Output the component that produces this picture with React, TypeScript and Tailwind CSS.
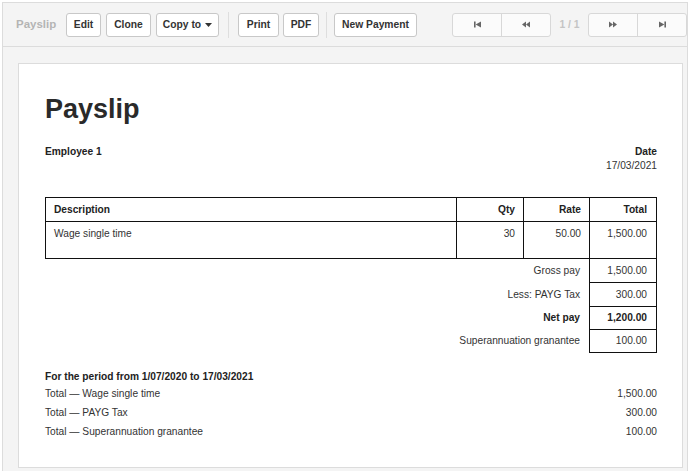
import React from "react";

const Btn = ({ w, children }: { w: string; children: React.ReactNode }) => (
  <div
    className={`${w} h-[24px] flex items-center justify-center border border-[#c8c8c8] rounded-[3px] bg-white text-[#333] text-[10.3px] font-bold`}
  >
    {children}
  </div>
);

const IconFirst = () => (
  <svg width="7" height="7" viewBox="0 0 7 7" fill="#666">
    <rect x="0" y="0.5" width="1.6" height="6" />
    <path d="M7 0.5 L1.6 3.5 L7 6.5Z" />
  </svg>
);
const IconPrev = () => (
  <svg width="8" height="7" viewBox="0 0 8 7" fill="#666">
    <path d="M4 0.5 L0 3.5 L4 6.5Z M8 0.5 L4 3.5 L8 6.5Z" />
  </svg>
);
const IconNext = () => (
  <svg width="8" height="7" viewBox="0 0 8 7" fill="#666">
    <path d="M0 0.5 L4 3.5 L0 6.5Z M4 0.5 L8 3.5 L4 6.5Z" />
  </svg>
);
const IconLast = () => (
  <svg width="7" height="7" viewBox="0 0 7 7" fill="#666">
    <path d="M0 0.5 L5.4 3.5 L0 6.5Z" />
    <rect x="5.4" y="0.5" width="1.6" height="6" />
  </svg>
);

const NavGroup = ({ a, b }: { a: React.ReactNode; b: React.ReactNode }) => (
  <div className="w-[99px] h-[24px] flex border border-[#d8d8d8] rounded-[3px] bg-[#fbfbfb]">
    <div className="flex-1 flex items-center justify-center border-r border-[#d8d8d8]">{a}</div>
    <div className="flex-1 flex items-center justify-center">{b}</div>
  </div>
);

const Sep = () => <div className="w-px h-[26px] bg-[#dedede]" />;

const SummaryRow = ({
  label,
  value,
  bold,
  h,
}: {
  label: string;
  value: string;
  bold?: boolean;
  h: string;
}) => (
  <div className={`flex justify-end ${bold ? "font-bold text-[#222]" : ""}`}>
    <div className={`${h} flex items-center pr-[9px]`}>{label}</div>
    <div
      className={`w-[66px] ${h} box-content flex items-center justify-end border-x border-b border-[#111]`}
    >
      <span className="pr-[9px]">{value}</span>
    </div>
  </div>
);

export default function App() {
  return (
    <div className="w-[690px] h-[471px] bg-white overflow-hidden font-['Liberation_Sans',Arial,sans-serif] text-[#333]">
      <div className="ml-[2px] mt-[2px] w-[686px] h-[480px] border border-[#dcdcdc] bg-[#f4f4f4]">
        {/* toolbar */}
        <div className="h-[44px] border-b border-[#dcdcdc] flex items-center pl-[13px]">
          <div className="text-[11.5px] font-bold text-[#b4b4b4] w-[40px]">Payslip</div>
          <div className="ml-[10px] flex items-center gap-[5px]">
            <Btn w="w-[35px]">Edit</Btn>
            <Btn w="w-[45px]">Clone</Btn>
            <Btn w="w-[63px]">
              <span>Copy to</span>
              <svg className="ml-[4px]" width="7" height="4" viewBox="0 0 7 4" fill="#333">
                <path d="M0 0 L7 0 L3.5 4Z" />
              </svg>
            </Btn>
          </div>
          <div className="mx-[9px]">
            <Sep />
          </div>
          <div className="flex items-center gap-[4px]">
            <Btn w="w-[41px]">Print</Btn>
            <Btn w="w-[36px]">PDF</Btn>
          </div>
          <div className="ml-[7px] mr-[7px]">
            <Sep />
          </div>
          <Btn w="w-[83px]">New Payment</Btn>
          <div className="ml-[35px] flex items-center">
            <NavGroup a={<IconFirst />} b={<IconPrev />} />
            <div className="w-[37px] text-center text-[10.3px] font-bold text-[#c4c4c4]">1 / 1</div>
            <NavGroup a={<IconNext />} b={<IconLast />} />
          </div>
        </div>

        {/* content */}
        <div className="pl-[15px] pr-[4px] pt-[16px]">
          <div className="bg-white border border-[#dcdcdc] h-[405px] pl-[26px] pr-[25px] pt-[29px] text-[10.2px] text-[#333]">
            <h1 className="text-[27px] leading-[32px] font-bold text-[#2a2a2a]">Payslip</h1>

            <div className="mt-[20px] flex justify-between leading-[14px]">
              <div className="font-bold text-[#222]">Employee 1</div>
              <div className="text-right">
                <div className="font-bold text-[#222]">Date</div>
                <div>17/03/2021</div>
              </div>
            </div>

            {/* table */}
            <div className="mt-[24px] border border-[#111] flex flex-col">
              <div className="flex h-[23px] box-content border-b border-[#111] font-bold text-[#222]">
                <div className="flex-1 flex items-center pl-[8px] border-r border-[#111]">Description</div>
                <div className="w-[67px] flex items-center justify-end pr-[8px] border-r border-[#111]">Qty</div>
                <div className="w-[66px] flex items-center justify-end pr-[8px] border-r border-[#111]">Rate</div>
                <div className="w-[66px] flex items-center justify-end pr-[9px]">Total</div>
              </div>
              <div className="flex h-[36px] leading-[13px]">
                <div className="flex-1 pl-[8px] pt-[5px] border-r border-[#111]">Wage single time</div>
                <div className="w-[67px] text-right pr-[8px] pt-[5px] border-r border-[#111]">30</div>
                <div className="w-[66px] text-right pr-[8px] pt-[5px] border-r border-[#111]">50.00</div>
                <div className="w-[66px] text-right pr-[9px] pt-[5px]">1,500.00</div>
              </div>
            </div>

            <div className="flex flex-col">
              <SummaryRow label="Gross pay" value="1,500.00" h="h-[23px]" />
              <SummaryRow label="Less: PAYG Tax" value="300.00" h="h-[23px]" />
              <SummaryRow label="Net pay" value="1,200.00" bold h="h-[22px]" />
              <SummaryRow label="Superannuation granantee" value="100.00" h="h-[22px]" />
            </div>

            <div className="mt-[17px]">
              <div className="font-bold text-[#222] leading-[14px]">
                For the period from 1/07/2020 to 17/03/2021
              </div>
              {[
                ["Total — Wage single time", "1,500.00"],
                ["Total — PAYG Tax", "300.00"],
                ["Total — Superannuation granantee", "100.00"],
              ].map(([l, v]) => (
                <div key={l} className="flex justify-between h-[19px] items-center">
                  <span>{l}</span>
                  <span>{v}</span>
                </div>
              ))}
            </div>
          </div>
        </div>
      </div>
    </div>
  );
}
